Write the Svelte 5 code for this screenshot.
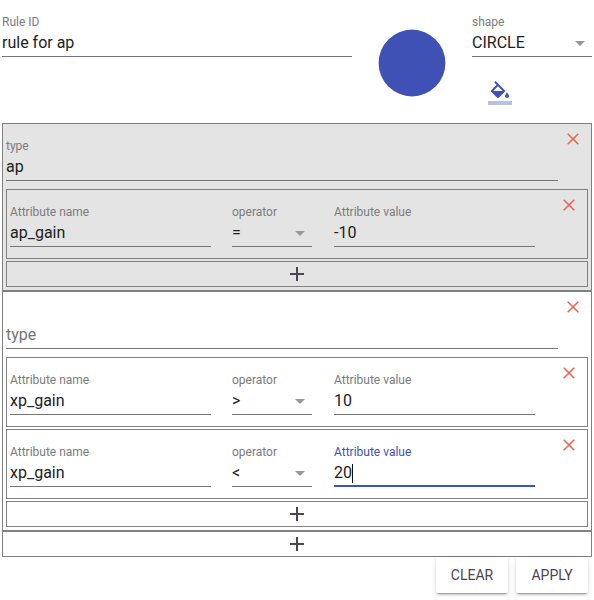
<script>
  const groups = [
    {
      type: 'ap',
      shaded: true,
      rules: [{ name: 'ap_gain', operator: '=', value: '-10' }]
    },
    {
      type: '',
      shaded: false,
      rules: [
        { name: 'xp_gain', operator: '>', value: '10' },
        { name: 'xp_gain', operator: '<', value: '20', focused: true }
      ]
    }
  ];
</script>

{#snippet field(label, value, kind, focused)}
  <div class="field {kind}" class:focused>
    <span class="label">{value ? label : ''}</span>
    <div class="value">
      {#if value}
        <span>{value}</span>
      {:else}
        <span class="placeholder">{label}</span>
      {/if}
      {#if focused}<i class="cursor"></i>{/if}
      {#if kind === 'shape' || kind === 'operator'}<i class="caret"></i>{/if}
    </div>
  </div>
{/snippet}

{#snippet close()}
  <button class="close" aria-label="Remove">
    <svg width="12" height="12" viewBox="0 0 12 12"><path d="M.7.7l10.6 10.6M11.3.7L.7 11.3" /></svg>
  </button>
{/snippet}

{#snippet add()}
  <button class="add" aria-label="Add">
    <svg width="14" height="14" viewBox="0 0 14 14"><path d="M7 0v14M0 7h14" /></svg>
  </button>
{/snippet}

<main>
  <header>
    {@render field('Rule ID', 'rule for ap', 'rule-id', false)}
    <svg class="preview" width="68" height="68" viewBox="0 0 68 68"><circle cx="34" cy="34" r="33.4" /></svg>
    <div class="style">
      {@render field('shape', 'CIRCLE', 'shape', false)}
      <svg class="fill" width="24" height="24" viewBox="0 0 24 24">
        <path d="M16.56 8.94L7.62 0 6.21 1.41l2.38 2.38-5.15 5.15c-.59.59-.59 1.54 0 2.12l5.5 5.5c.29.29.68.44 1.06.44s.77-.15 1.06-.44l5.5-5.5c.59-.58.59-1.53 0-2.12zM5.21 10L10 5.21 14.79 10H5.21zM19 11.5s-2 2.17-2 3.5c0 1.1.9 2 2 2s2-.9 2-2c0-1.33-2-3.5-2-3.5z" />
        <path d="M0 20h24v4H0z" opacity=".36" />
      </svg>
    </div>
  </header>

  {#each groups as group}
    <section class="group" class:shaded={group.shaded}>
      <div class="group-head">
        {@render field('type', group.type, 'type', false)}
        {@render close()}
      </div>
      {#each group.rules as rule}
        <div class="rule">
          {@render field('Attribute name', rule.name, 'attribute', false)}
          {@render field('operator', rule.operator, 'operator', false)}
          {@render field('Attribute value', rule.value, 'attribute', rule.focused)}
          {@render close()}
        </div>
      {/each}
      {@render add()}
    </section>
  {/each}
  {@render add()}

  <footer>
    <button>CLEAR</button>
    <button>APPLY</button>
  </footer>
</main>

<style>
  :global(body) {
    background: #fff;
  }
  main {
    box-sizing: border-box;
    width: 594px;
    height: 600px;
    padding: 0 2px;
    overflow: hidden;
    font-family: Roboto, sans-serif;
    color: #212121;
  }
  button {
    padding: 0;
    border: 0;
    background: none;
    font-family: inherit;
  }
  svg {
    display: block;
  }
  header {
    display: flex;
    align-items: flex-start;
    height: 109px;
    padding-top: 14px;
  }
  .preview {
    margin: 15px 26px 0 26px;
    fill: #3f51b5;
  }
  .fill {
    margin: 24px 0 0 16px;
    fill: #3f51b5;
  }
  .field {
    box-sizing: border-box;
    height: 43px;
    border-bottom: 1px solid #757575;
    flex: none;
  }
  .label {
    display: block;
    height: 16px;
    font-size: 12px;
    line-height: 16px;
    color: #7b7b7b;
  }
  .value {
    display: flex;
    align-items: center;
    height: 26px;
    font-size: 16px;
    line-height: 26px;
  }
  .placeholder {
    color: #757575;
  }
  .rule-id {
    width: 350px;
  }
  .shape {
    width: 120px;
  }
  .type {
    width: 552px;
  }
  .attribute {
    width: 201px;
  }
  .operator {
    width: 80px;
  }
  .caret {
    margin: 1px 7px 0 auto;
    border: 5px solid transparent;
    border-top-color: #979797;
    border-bottom: 0;
  }
  .focused {
    border-bottom: 2px solid #3f51b5;
  }
  .focused .label {
    color: #3f51b5;
  }
  .cursor {
    width: 1px;
    height: 19px;
    background: #111;
  }
  .group {
    display: flex;
    flex-direction: column;
    gap: 2px;
    padding: 0 3px 3px;
    border: 1px solid #808080;
  }
  .shaded {
    background: #e4e4e4;
  }
  .group-head {
    display: flex;
    height: 49px;
    padding: 14px 0 0;
  }
  .group-head .close {
    margin-right: 9px;
  }
  .rule {
    display: flex;
    box-sizing: border-box;
    height: 70px;
    padding: 14px 0 0 3px;
    border: 1px solid #808080;
  }
  .rule .operator {
    margin: 0 22px 0 21px;
  }
  .close {
    width: 12px;
    height: 12px;
    margin: -5px 12px 0 auto;
  }
  .rule .close {
    margin-right: 12px;
  }
  .close path {
    fill: none;
    stroke: #f0604d;
    stroke-width: 1.5;
  }
  .add {
    box-sizing: border-box;
    display: flex;
    align-items: center;
    justify-content: center;
    width: 100%;
    height: 26px;
    border: 1px solid #808080;
  }
  .add path {
    stroke: #4a4550;
    stroke-width: 2;
  }
  footer {
    display: flex;
    justify-content: flex-end;
    gap: 8px;
    padding-right: 4px;
  }
  footer button {
    width: 72px;
    height: 36px;
    border-radius: 2px;
    font-size: 14px;
    color: #4a4550;
    box-shadow: 0 3px 1px -2px rgba(0, 0, 0, 0.2), 0 2px 2px 0 rgba(0, 0, 0, 0.14), 0 1px 5px 0 rgba(0, 0, 0, 0.12);
  }
</style>
